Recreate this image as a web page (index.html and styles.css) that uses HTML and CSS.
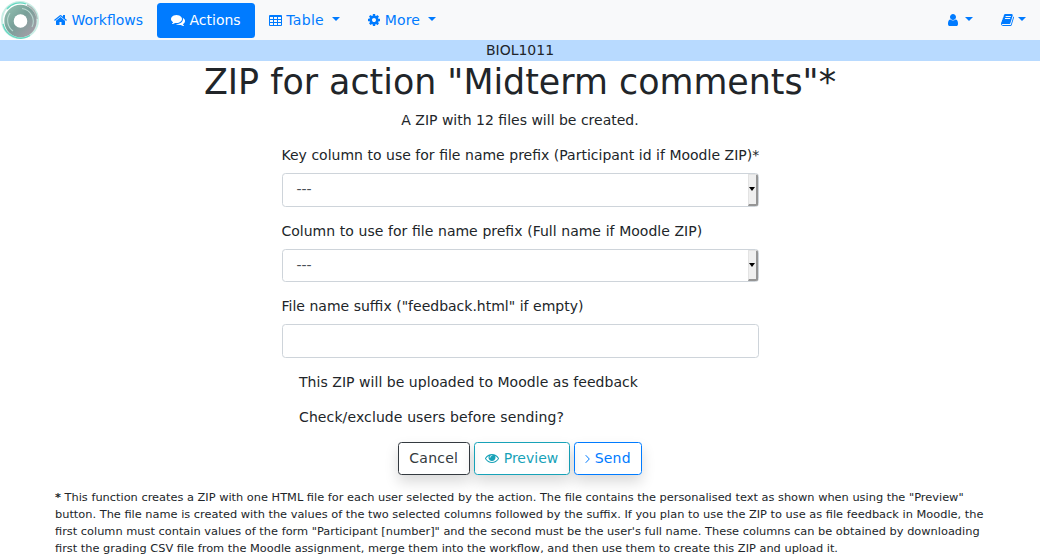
FILE: index.html
```html
<!DOCTYPE html>
<html lang="en">
<head>
<meta charset="utf-8">
<title>ZIP for action</title>
<link rel="stylesheet" href="styles.css">
</head>
<body>
<nav class="navbar">
  <a class="brand" href="#"><svg width="40" height="40" viewBox="0 0 40 40">
    <defs><linearGradient id="ring" x1="0" y1="0" x2="1" y2="1"><stop offset="0" stop-color="#8cb9ac"/><stop offset=".45" stop-color="#78a099"/><stop offset="1" stop-color="#a09ea6"/></linearGradient></defs>
    <rect width="40" height="40" fill="#fff"/>
    <circle cx="20" cy="20" r="18" fill="none" stroke="#c9eee5" stroke-width="2"/>
    <circle cx="20.500" cy="21" r="11.200" fill="none" stroke="url(#ring)" stroke-width="10"/>
    <path d="M3 24A18 18 0 0 0 30 35.500M7 9A17 17 0 0 1 26 4" fill="none" stroke="#66d8c1" stroke-width="1.300"/>
    <path d="M32 27A13 13 0 0 0 22 8.500M10 13A13 13 0 0 0 13 31" fill="none" stroke="#b9d8d1" stroke-width="1.100"/>
    <path d="M27 5A17 17 0 0 1 37 19" fill="none" stroke="#a9b5b4" stroke-width="1.500"/>
    <circle cx="20.500" cy="21" r="6.800" fill="#fff"/>
  </svg></a>
  <a class="nav-link" href="#"><svg class="icon w13" viewBox="64 0 1664 1792"><path d="M1472 992v480q0 26-19 45t-45 19h-384v-384h-256v384h-384q-26 0-45-19t-19-45v-480q0-1 .5-3t.5-3l575-474 575 474q1 2 1 6zm223-69l-62 74q-8 9-21 11h-3q-13 0-21-7l-692-577-692 577q-12 8-24 7-13-2-21-11l-62-74q-8-10-7-23.500t11-21.500l719-599q32-26 76-26t76 26l244 204v-195q0-14 9-23t23-9h192q14 0 23 9t9 23v408l219 182q10 8 11 21.500t-7 23.500z"/></svg> Workflows</a>
  <a class="nav-link active" href="#"><svg class="icon w14" viewBox="0 0 1792 1792"><path d="M1408 768q0 139-94 257t-256.500 186.500-353.500 68.500q-86 0-176-16-124 88-278 128-36 9-86 16h-3q-11 0-20.500-8t-11.500-21q-1-3-1-6.500t.5-6.500 2-6l2.500-5 3.500-5.500 4-5 4.500-5 4-4.500q5-6 23-25t26-29.500 22.500-29 25-38.500 20.500-44q-124-72-195-177t-71-224q0-139 94-257t256.500-186.500 353.500-68.500 353.500 68.500 256.500 186.500 94 257zm384 256q0 120-71 224.500t-195 176.500q10 24 20.500 44t25 38.500 22.500 29 26 29.500 23 25q1 1 4 4.500t4.500 5 4 5 3.500 5.500l2.500 5 2 6 .5 6.500-1 6.500q-3 14-13 22t-22 7q-50-7-86-16-154-40-278-128-90 16-176 16-271 0-472-132 58 4 88 4 161 0 309-45t264-129q125-92 192-212t67-254q0-77-23-152 129 71 204 178t75 230z"/></svg> Actions</a>
  <a class="nav-link table-link" href="#"><svg class="icon w13" viewBox="0 0 13 14"><path fill-rule="evenodd" d="M1 2H12Q13 2 13 3V12Q13 13 12 13H1Q0 13 0 12V3Q0 2 1 2ZM1 4V6H4V4ZM5 4V6H8V4ZM9 4V6H12V4ZM1 7V9H4V7ZM5 7V9H8V7ZM9 7V9H12V7ZM1 10V12H4V10ZM5 10V12H8V10ZM9 10V12H12V10Z"/></svg> Table <span class="caret"></span></a>
  <a class="nav-link more-link" href="#"><svg class="icon w12" viewBox="128 0 1536 1792"><path d="M1152 896q0-106-75-181t-181-75-181 75-75 181 75 181 181 75 181-75 75-181zm512-109v222q0 12-8 23t-20 13l-185 28q-19 54-39 91 35 50 107 138 10 12 10 25t-9 23q-27 37-99 108t-94 71q-12 0-26-9l-138-108q-44 23-91 38-16 136-29 186-7 28-36 28h-222q-14 0-24.500-8.500t-11.500-21.500l-28-184q-49-16-90-37l-141 107q-10 9-25 9-14 0-25-11-126-114-165-168-7-10-7-23 0-12 8-23 15-21 51-66.500t54-70.500q-27-50-41-99l-183-27q-13-2-21-12.500t-8-23.500v-222q0-12 8-23t19-13l186-28q14-46 39-92-40-57-107-138-10-12-10-24 0-10 9-23 26-36 98.500-107.500t94.500-71.500q13 0 26 10l138 107q44-23 91-38 16-136 29-186 7-28 36-28h222q14 0 24.500 8.500t11.500 21.500l28 184q49 16 90 37l142-107q9-9 24-9 13 0 25 10 129 119 165 170 7 8 7 22 0 12-8 23-15 21-51 66.500t-54 70.500q26 50 41 98l183 28q13 2 21 12.500t8 23.500z"/></svg> More <span class="caret"></span></a>
  <div class="nav-right">
    <a class="nav-link user-link" href="#"><svg class="icon w10" viewBox="256 0 1280 1792"><path d="M1536 1399q0 109-62.500 187t-150.500 78h-854q-88 0-150.500-78t-62.500-187q0-85 8.500-160.500t31.500-152 58.500-131 94-89 134.500-34.500q131 128 313 128t313-128q76 0 134.500 34.500t94 89 58.500 131 31.500 152 8.500 160.500zm-256-887q0 159-112.500 271.500t-271.500 112.500-271.500-112.500-112.500-271.500 112.500-271.500 271.500-112.500 271.500 112.500 112.500 271.500z"/></svg> <span class="caret"></span></a>
    <a class="nav-link" href="#"><svg class="icon w13" viewBox="64 0 1664 1792"><path d="M1703 478q40 57 18 129l-275 906q-19 64-76.500 107.500t-122.500 43.500h-923q-77 0-148.500-53.500t-99.500-131.500q-24-67-2-127 0-4 3-27t4-37q1-8-3-21.500t-3-19.500q2-11 8-21t16.500-23.500 16.500-23.500q23-38 45-91.500t30-91.500q3-10 .5-30t-.5-28q3-11 17-28t17-23q21-36 42-92t25-90q1-9-2.500-32t.5-28q4-13 22-30.500t22-22.500q19-26 42.500-84.500t27.500-96.500q1-8-3-25.500t-2-26.500q2-8 9-18t18-23 17-21q8-12 16.500-30.500t15-35 16-36 19.500-32 26.500-23.500 36-11.500 47.500 5.500l-1 3q38-9 51-9h761q74 0 114 56t18 130l-274 906q-36 119-71.500 153.500t-128.500 34.500h-869q-27 0-38 15-11 16-1 43 24 70 144 70h923q29 0 56-15.500t35-41.500l300-987q7-22 5-57 38 15 59 43zm-1064 2q-4 13 2 22.500t20 9.500h608q13 0 25.500-9.500t16.500-22.500l21-64q4-13-2-22.500t-20-9.500h-608q-13 0-25.500 9.500t-16.500 22.500zm-83 256q-4 13 2 22.500t20 9.500h608q13 0 25.500-9.500t16.500-22.500l21-64q4-13-2-22.500t-20-9.500h-608q-13 0-25.500 9.500t-16.500 22.500z"/></svg><span class="caret"></span></a>
  </div>
</nav>
<div class="workflow-name">BIOL1011</div>
<main class="container">
  <h1>ZIP for action "Midterm comments"*</h1>
  <p class="lead">A ZIP with 12 files will be created.</p>
  <form class="zip-form">
    <div class="group">
      <label>Key column to use for file name prefix (Participant id if Moodle ZIP)*</label>
      <div class="control select"><span>---</span><span class="drop"></span></div>
    </div>
    <div class="group">
      <label class="wide">Column to use for file name prefix (Full name if Moodle ZIP)</label>
      <div class="control select"><span>---</span><span class="drop"></span></div>
    </div>
    <div class="group">
      <label>File name suffix ("feedback.html" if empty)</label>
      <div class="control"></div>
    </div>
    <div class="group check moodle">This ZIP will be uploaded to Moodle as feedback</div>
    <div class="group check exclude">Check/exclude users before sending?</div>
  </form>
  <div class="actions">
    <a class="btn dark" href="#">Cancel</a>
    <a class="btn info" href="#"><svg class="icon w14" viewBox="0 0 1792 1792"><path d="M1664 960q-152-236-381-353 61 104 61 225 0 185-131.500 316.500t-316.500 131.500-316.500-131.500-131.500-316.500q0-121 61-225-229 117-381 353 133 205 333.500 326.500t434.500 121.500 434.500-121.500 333.500-326.500zm-720-384q0-20-14-34t-34-14q-125 0-214.500 89.500t-89.500 214.500q0 20 14 34t34 14 34-14 14-34q0-86 61-147t147-61q20 0 34-14t14-34zm848 384q0 34-20 69-140 230-376.500 368.500t-499.500 138.500-499.500-139-376.500-368q-20-35-20-69t20-69q140-229 376.500-368t499.500-139 499.500 139 376.500 368q20 35 20 69z"/></svg> Preview</a>
    <a class="btn primary" href="#"><svg class="icon w5" viewBox="0 0 5 14"><path d="M.7 4.200L4.300 8L.7 11.800" fill="none" stroke="currentColor"/></svg> Send</a>
  </div>
  <p class="note"><b>*</b> This function creates a ZIP with one HTML file for each user selected by the action. The file contains the personalised text as shown when using the "Preview" button. The file name is created with the values of the two selected columns followed by the suffix. If you plan to use the ZIP to use as file feedback in Moodle, the first column must contain values of the form "Participant [number]" and the second must be the user's full name. These columns can be obtained by downloading first the grading CSV file from the Moodle assignment, merge them into the workflow, and then use them to create this ZIP and upload it.</p>
</main>
</body>
</html>
```

FILE: styles.css
```css
* { box-sizing: border-box; }
html { font-size: 14px; overflow: hidden; }
body {
  margin: 0;
  font-family: "DejaVu Sans", sans-serif;
  line-height: 1.5;
  color: #212529;
  background: #fff;
}
a { color: #007bff; text-decoration: none; }
.navbar { display: flex; align-items: center; height: 40px; background: #f8f9fa; }
.brand { display: block; height: 40px; }
.brand svg { display: block; }
.nav-link { display: block; padding: 7px 14px; white-space: nowrap; }
.nav-link.active { color: #fff; background: #007bff; border-radius: 3.5px; }
.table-link { letter-spacing: .28px; }
.more-link { letter-spacing: .1px; }
.user-link { word-spacing: -.8px; }
.nav-right { display: flex; margin-left: auto; }
.icon { display: inline-block; height: 14px; vertical-align: -2px; fill: currentColor; }
.w14 { width: 14px; }
.w13 { width: 13px; }
.w12 { width: 12px; }
.w10 { width: 10px; }
.w5 { width: 5px; }
.caret {
  display: inline-block;
  margin-left: .255em;
  vertical-align: .255em;
  border-top: .3em solid;
  border-right: .3em solid transparent;
  border-left: .3em solid transparent;
}
.workflow-name { height: 21px; text-align: center; background: #b8daff; }
.container { width: 960px; margin: 0 auto; padding: 0 15px; }
h1 { height: 42px; margin: 0 0 7px; font-size: 34.85px; font-weight: 400; line-height: 42px; text-align: center; }
.lead { margin: 0 0 14px; text-align: center; }
.zip-form { width: 477px; margin: 0 auto; }
.group { margin-bottom: 14px; }
.group label { display: block; margin-bottom: 7px; white-space: nowrap; word-spacing: .08px; }
.group .wide { word-spacing: .25px; }
.check { padding-left: 17.5px; }
.moodle { letter-spacing: .04px; }
.exclude { letter-spacing: .11px; }
.control {
  display: flex;
  height: 33.5px;
  color: #495057;
  border: 1px solid #ced4da;
  border-radius: 3.5px;
}
.select { justify-content: space-between; padding-left: 14px; line-height: 31px; }
.drop {
  display: flex;
  align-items: center;
  justify-content: center;
  width: 10px;
  background: #efefef;
  border-style: solid;
  border-width: 1px 2px 2px 1px;
  border-color: #e3e3e3 #959595 #959595 #e3e3e3;
  border-radius: 0 2px 2px 0;
}
.drop::after {
  content: "";
  border-top: 4px solid #000;
  border-right: 3px solid transparent;
  border-left: 3px solid transparent;
}
.actions { display: flex; justify-content: center; gap: 4px; }
.btn {
  height: 33.5px;
  padding: 5.25px 10.5px;
  border: 1px solid;
  border-radius: 3.5px;
  box-shadow: 0 7px 14px rgba(0, 0, 0, .15);
}
.dark { color: #343a40; letter-spacing: .25px; }
.info { color: #17a2b8; }
.primary { color: #007bff; letter-spacing: .15px; }
.note { margin: 14px 0 0; font-size: 11.37px; line-height: 17px; }
```
